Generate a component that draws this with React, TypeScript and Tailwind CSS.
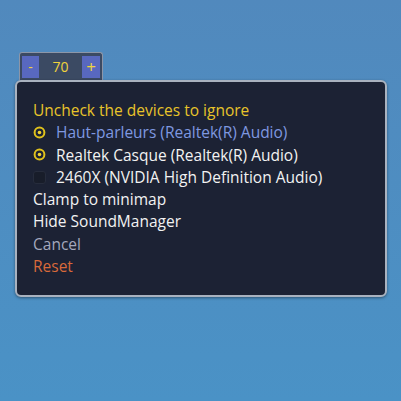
import React from 'react';

const font = { fontFamily: '"Open Sans", "DejaVu Sans", sans-serif' };

function Radio({ checked }: { checked: boolean }) {
  if (!checked) {
    return <span className="inline-block h-[13px] w-[13px] rounded-[3px] border border-[#262c3c] bg-[#181d2a]" />;
  }
  return (
    <svg width="13" height="13" viewBox="0 0 13 13">
      <circle cx="6.5" cy="6.5" r="4.9" fill="none" stroke="#e0c21c" strokeWidth="2" />
      <circle cx="6.5" cy="6.5" r="1.8" fill="#f0d430" />
    </svg>
  );
}

const devices = [
  { label: 'Haut-parleurs (Realtek(R) Audio)', checked: true, color: 'text-[#7f98e0]' },
  { label: 'Realtek Casque (Realtek(R) Audio)', checked: true, color: 'text-[#f2f2f2]' },
  { label: '2460X (NVIDIA High Definition Audio)', checked: false, color: 'text-[#f2f2f2]' },
];

export default function App() {
  return (
    <div className="h-[401px] w-[401px] overflow-hidden bg-gradient-to-b from-[#5189bd] to-[#4a92c6]" style={font}>
      <div className="pl-[19px] pt-[52px]">
        <div className="flex h-[28px] w-[84px] items-center gap-[2px] rounded-t-[3px] border-x border-t border-[#8c96a8] bg-[#3b4a63] px-[2px]">
          <button className="h-[22px] w-[17px] bg-[#5868bf] text-[14px] leading-[22px] text-[#f0d23c]">-</button>
          <span className="flex-1 text-center text-[14px] font-medium text-[#f0d23c]">70</span>
          <button className="h-[22px] w-[18px] bg-[#5868bf] text-[17px] leading-[22px] text-[#f0d23c]">+</button>
        </div>
      </div>
      <div className="ml-[15px] w-[372px] rounded-[6px] border-2 border-[#a9b2bf] bg-[#1c2234] pb-[18px] pl-[16px] pt-[17px] shadow-[0_1px_3px_rgba(0,0,0,0.4)]">
        <div className="flex flex-col text-[15.5px] leading-[22.3px]">
          <span className="text-[#e8c42a]">Uncheck the devices to ignore</span>
          {devices.map((d) => (
            <div key={d.label} className="flex items-center">
              <span className="flex w-[23px] items-center">
                <Radio checked={d.checked} />
              </span>
              <span className={d.color}>{d.label}</span>
            </div>
          ))}
          <span className="text-[#f2f2f2]">Clamp to minimap</span>
          <span className="text-[#f2f2f2]">Hide SoundManager</span>
          <span className="text-[#a4a8bd]">Cancel</span>
          <span className="text-[#d8693a]">Reset</span>
        </div>
      </div>
    </div>
  );
}
